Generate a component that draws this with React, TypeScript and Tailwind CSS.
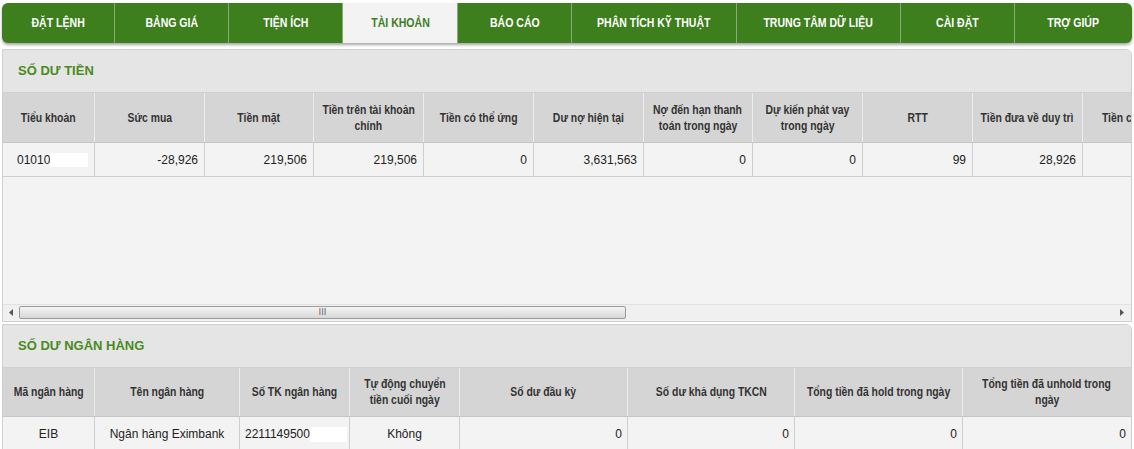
import React from "react";

const tabs = [
  { t: "ĐẶT LỆNH", w: 113 },
  { t: "BẢNG GIÁ", w: 114 },
  { t: "TIỆN ÍCH", w: 114 },
  { t: "TÀI KHOẢN", w: 115, active: true },
  { t: "BÁO CÁO", w: 114 },
  { t: "PHÂN TÍCH KỸ THUẬT", w: 165 },
  { t: "TRUNG TÂM DỮ LIỆU", w: 164 },
  { t: "CÀI ĐẶT", w: 114 },
  { t: "TRỢ GIÚP", w: 117 },
];

const cols1 = [
  { h: ["Tiểu khoản"], w: 92 },
  { h: ["Sức mua"], w: 110 },
  { h: ["Tiền mặt"], w: 109 },
  { h: ["Tiền trên tài khoản", "chính"], w: 110 },
  { h: ["Tiền có thể ứng"], w: 110 },
  { h: ["Dư nợ hiện tại"], w: 110 },
  { h: ["Nợ đến hạn thanh", "toán trong ngày"], w: 109 },
  { h: ["Dự kiến phát vay", "trong ngày"], w: 110 },
  { h: ["RTT"], w: 110 },
  { h: ["Tiền đưa về duy trì"], w: 110 },
  { h: ["Tiền có thể rút"], w: 110 },
];
const row1 = ["01010", "-28,926", "219,506", "219,506", "0", "3,631,563", "0", "0", "99", "28,926", ""];

const cols2 = [
  { h: ["Mã ngân hàng"], w: 92 },
  { h: ["Tên ngân hàng"], w: 145 },
  { h: ["Số TK ngân hàng"], w: 110 },
  { h: ["Tự động chuyển", "tiền cuối ngày"], w: 110 },
  { h: ["Số dư đầu kỳ"], w: 168 },
  { h: ["Số dư khả dụng TKCN"], w: 167 },
  { h: ["Tổng tiền đã hold trong ngày"], w: 168 },
  { h: ["Tổng tiền đã unhold trong", "ngày"], w: 169 },
];
const row2 = ["EIB", "Ngân hàng Eximbank", "2211149500", "Không", "0", "0", "0", "0"];

const arial = { fontFamily: '"Liberation Sans", Arial, sans-serif' };

function HeaderRow({ cols, h }: { cols: { h: string[]; w: number }[]; h: number }) {
  return (
    <div className="flex bg-[#d5d5d5] border-b border-[#c6c6c6]" style={{ height: h }}>
      {cols.map((c, i) => (
        <div
          key={i}
          className="shrink-0 flex flex-col items-center justify-center text-center border-r border-[#ececec] text-[13px] font-bold text-[#333] leading-[16px]"
          style={{ width: c.w }}
        >
          {c.h.map((l, j) => (
            <span key={j} className="inline-block whitespace-nowrap scale-x-[0.8]">{l}</span>
          ))}
        </div>
      ))}
    </div>
  );
}

export default function App() {
  return (
    <div className="w-[1134px] h-[449px] overflow-hidden bg-white relative" style={arial}>
      {/* nav */}
      <div className="pt-[3px] px-[2px]">
        <div className="flex h-[40px] bg-[#3d7e1d] rounded-[6px] overflow-hidden shadow-[0_2px_3px_rgba(0,0,0,0.35)]">
          {tabs.map((t, i) => (
            <div
              key={i}
              className={
                "shrink-0 flex items-center justify-center text-[13.5px] font-bold " +
                (t.active ? "bg-[#f3f3f3] text-[#3d7e1d]" : "text-white") +
                (i < tabs.length - 1 ? " border-r border-[#8aa879]" : "")
              }
              style={{ width: t.w }}
            >
              <span className="inline-block whitespace-nowrap scale-x-[0.78]">{t.t}</span>
            </div>
          ))}
        </div>
      </div>

      {/* panel 1 */}
      <div className="mt-[6px] ml-[2px] w-[1130px] h-[273px] border border-[#cfcfcf] rounded-tr-[6px] bg-[#f3f3f3] overflow-hidden flex flex-col">
        <div className="h-[43px] shrink-0 bg-[#e5e5e5] flex items-center pl-[15px] border-b border-[#d0d0d0]">
          <span className="text-[#4a8a1e] font-bold text-[13px]">SỐ DƯ TIỀN</span>
        </div>
        <div className="overflow-hidden">
          <div className="w-[1300px]">
            <HeaderRow cols={cols1} h={50} />
            <div className="flex h-[34px] bg-[#f3f3f3] border-b border-[#cfcfcf]">
              {cols1.map((c, i) => (
                <div
                  key={i}
                  className={
                    "shrink-0 flex items-center border-r border-[#cfcfcf] text-[12px] text-[#222] px-[6px] " +
                    (i === 0 ? "justify-start pl-[14px]" : "justify-end")
                  }
                  style={{ width: c.w }}
                >
                  {i === 0 ? (
                    <span className="flex items-center">
                      {row1[i]}
                      <span className="inline-block w-[38px] h-[14px] bg-white" />
                    </span>
                  ) : (
                    row1[i]
                  )}
                </div>
              ))}
            </div>
          </div>
        </div>
        <div className="flex-1" />
        {/* scrollbar */}
        <div className="h-[16px] shrink-0 flex items-center bg-[#f0f0f0] border-t border-[#e2e2e2] mb-[1px]">
          <div className="w-[16px] flex items-center justify-center">
            <svg width="4" height="7" viewBox="0 0 4 7"><path d="M4 0 L0 3.5 L4 7 Z" fill="#555" /></svg>
          </div>
          <div className="w-[607px] h-[13px] rounded-[2px] border border-[#9a9a9a] bg-gradient-to-b from-[#f4f4f4] to-[#d8d8d8] flex items-center justify-center">
            <span className="text-[9px] text-[#666] leading-none" style={{ fontFamily: '"DejaVu Sans", sans-serif' }}>III</span>
          </div>
          <div className="flex-1" />
          <div className="w-[18px] flex items-center justify-center">
            <svg width="4" height="7" viewBox="0 0 4 7"><path d="M0 0 L4 3.5 L0 7 Z" fill="#555" /></svg>
          </div>
        </div>
      </div>

      {/* panel 2 */}
      <div className="mt-[2px] ml-[2px] w-[1130px] border border-[#cfcfcf] rounded-tr-[6px] bg-[#f3f3f3] overflow-hidden">
        <div className="h-[43px] bg-[#e5e5e5] flex items-center pl-[15px] border-b border-[#d0d0d0]">
          <span className="text-[#4a8a1e] font-bold text-[13px]">SỐ DƯ NGÂN HÀNG</span>
        </div>
        <HeaderRow cols={cols2} h={49} />
        <div className="flex h-[34px] bg-[#f3f3f3]">
          {cols2.map((c, i) => (
            <div
              key={i}
              className={
                "shrink-0 flex items-center border-r border-[#cfcfcf] text-[12px] text-[#222] px-[5px] " +
                (i === 2 ? "justify-start" : i < 4 ? "justify-center" : "justify-end")
              }
              style={{ width: c.w }}
            >
              {i === 2 ? (
                <span className="flex items-center">
                  {row2[i]}
                  <span className="inline-block w-[37px] h-[15px] bg-white" />
                </span>
              ) : (
                row2[i]
              )}
            </div>
          ))}
        </div>
      </div>
    </div>
  );
}
